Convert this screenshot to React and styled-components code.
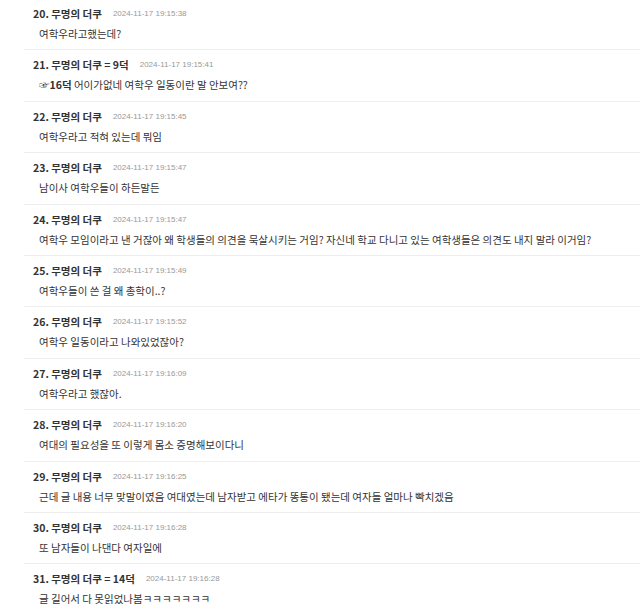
import React from "react";
import styled, { createGlobalStyle } from "styled-components";

const GlobalStyle = createGlobalStyle`
  html, body {
    margin: 0;
    padding: 0;
    background: #ffffff;
  }
  body {
    font-family: "Noto Sans CJK KR", "Noto Sans", sans-serif;
    color: #333333;
  }
`;

const comments = [
  { no: 20, time: "2024-11-17 19:15:38", text: "여학우라고했는데?" },
  {
    no: 21,
    score: "9덕",
    time: "2024-11-17 19:15:41",
    reply: "16덕",
    text: " 어이가없네 여학우 일동이란 말 안보여??",
  },
  { no: 22, time: "2024-11-17 19:15:45", text: "여학우라고 적혀 있는데 뭐임" },
  { no: 23, time: "2024-11-17 19:15:47", text: "남이사 여학우들이 하든말든" },
  {
    no: 24,
    time: "2024-11-17 19:15:47",
    text: "여학우 모임이라고 낸 거잖아 왜 학생들의 의견을 묵살시키는 거임? 자신네 학교 다니고 있는 여학생들은 의견도 내지 말라 이거임?",
  },
  { no: 25, time: "2024-11-17 19:15:49", text: "여학우들이 쓴 걸 왜 총학이..?" },
  { no: 26, time: "2024-11-17 19:15:52", text: "여학우 일동이라고 나와있었잖아?" },
  { no: 27, time: "2024-11-17 19:16:09", text: "여학우라고 했잖아." },
  { no: 28, time: "2024-11-17 19:16:20", text: "여대의 필요성을 또 이렇게 몸소 증명해보이다니" },
  {
    no: 29,
    time: "2024-11-17 19:16:25",
    text: "근데 글 내용 너무 맞말이였음 여대였는데 남자받고 에타가 똥통이 됐는데 여자들 얼마나 빡치겠음",
  },
  { no: 30, time: "2024-11-17 19:16:28", text: "또 남자들이 나댄다 여자일에" },
  {
    no: 31,
    score: "14덕",
    time: "2024-11-17 19:16:28",
    text: "글 길어서 다 못읽었나봄ㅋㅋㅋㅋㅋㅋㅋ",
  },
];

export default function App() {
  return (
    <>
      <GlobalStyle />
      <CommentList>
        {comments.map((comment) => (
          <CommentRow key={comment.no}>
            <CommentHeader>
              <Nickname>
                {comment.no}. 무명의 더쿠
                {comment.score && <Score> = {comment.score}</Score>}
              </Nickname>
              <DateText>{comment.time}</DateText>
            </CommentHeader>
            <CommentBody>
              {comment.reply && <ReplyTag>☞{comment.reply}</ReplyTag>}
              {comment.text}
            </CommentBody>
          </CommentRow>
        ))}
      </CommentList>
    </>
  );
}

const CommentList = styled.ul`
  list-style: none;
  margin: 0 0 0 24px;
  padding: 0;
`;

const CommentRow = styled.li`
  display: flex;
  flex-direction: column;
  gap: 4px;
  padding: 7px 0 7.4px 9px;
  border-top: 1px solid #eeeeee;

  &:first-child {
    border-top: none;
    padding-top: 6px;
  }
`;

const CommentHeader = styled.div`
  display: flex;
  align-items: center;
  gap: 11px;
  height: 16px;
`;

const Nickname = styled.span`
  font-size: 10.5px;
  font-weight: 700;
  line-height: 16px;
  color: #333333;
  white-space: nowrap;
`;

const Score = styled.span`
  font-weight: 700;
`;

const DateText = styled.span`
  font-family: "Liberation Sans", Arial, sans-serif;
  font-size: 8px;
  line-height: 16px;
  color: #999999;
  white-space: nowrap;
`;

const CommentBody = styled.div`
  padding-left: 6px;
  font-size: 10.5px;
  line-height: 16px;
  color: #333333;
  white-space: nowrap;
`;

const ReplyTag = styled.b`
  font-weight: 700;
  color: #333333;
`;
